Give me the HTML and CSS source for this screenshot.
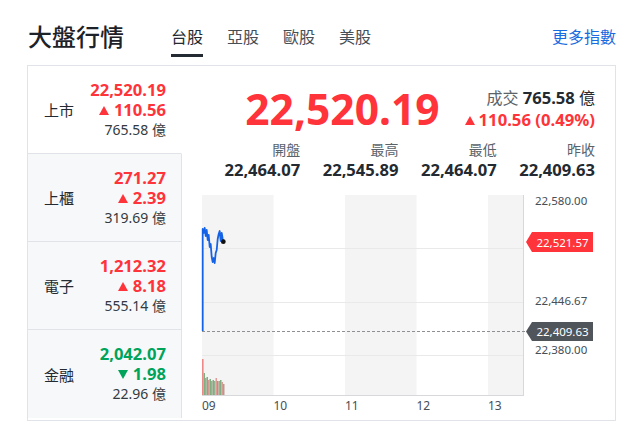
FILE: index.html
```html
<!DOCTYPE html>
<html lang="zh-Hant">
<head>
<meta charset="utf-8">
<title>大盤行情</title>
<link rel="stylesheet" href="styles.css">
</head>
<body>
<div class="page">
  <div class="header">
    <h1 class="title">大盤行情</h1>
    <div class="tabs">
      <span class="tab active">台股</span>
      <span class="tab">亞股</span>
      <span class="tab">歐股</span>
      <span class="tab">美股</span>
    </div>
    <a class="more">更多指數</a>
  </div>
  <div class="card">
    <div class="markets">
      <div class="mkt active">
        <div class="mkt-name">上市</div>
        <div class="mkt-vals">
          <div class="val up">22,520.19</div>
          <div class="val up"><span class="tri-up"></span>110.56</div>
          <div class="vol">765.58 億</div>
        </div>
      </div>
      <div class="mkt">
        <div class="mkt-name">上櫃</div>
        <div class="mkt-vals">
          <div class="val up">271.27</div>
          <div class="val up"><span class="tri-up"></span>2.39</div>
          <div class="vol">319.69 億</div>
        </div>
      </div>
      <div class="mkt">
        <div class="mkt-name">電子</div>
        <div class="mkt-vals">
          <div class="val up">1,212.32</div>
          <div class="val up"><span class="tri-up"></span>8.18</div>
          <div class="vol">555.14 億</div>
        </div>
      </div>
      <div class="mkt last">
        <div class="mkt-name">金融</div>
        <div class="mkt-vals">
          <div class="val down">2,042.07</div>
          <div class="val down"><span class="tri-down"></span>1.98</div>
          <div class="vol">22.96 億</div>
        </div>
      </div>
    </div>
    <div class="main">
      <div class="quote">
        <div class="big up">22,520.19</div>
        <div class="quote-side">
          <div class="deal"><span class="deal-label">成交</span> <b>765.58</b> 億</div>
          <div class="chg up"><span class="tri-up small"></span>110.56 (0.49%)</div>
        </div>
      </div>
      <div class="stats">
        <div class="stat"><div class="stat-label">開盤</div><div class="stat-val">22,464.07</div></div>
        <div class="stat"><div class="stat-label">最高</div><div class="stat-val">22,545.89</div></div>
        <div class="stat"><div class="stat-label">最低</div><div class="stat-val">22,464.07</div></div>
        <div class="stat"><div class="stat-label">昨收</div><div class="stat-val">22,409.63</div></div>
      </div>
      <svg class="chart" width="393" height="222" viewBox="0 0 393 222">
        <rect x="0" y="0" width="71.5" height="200" fill="#f4f4f4"/>
        <rect x="143" y="0" width="71.5" height="200" fill="#f4f4f4"/>
        <rect x="286" y="0" width="35" height="200" fill="#f4f4f4"/>
        <g stroke="#e9e9e9" stroke-width="1">
          <line x1="0" y1="53.5" x2="321" y2="53.5"/>
          <line x1="0" y1="107.5" x2="321" y2="107.5"/>
          <line x1="0" y1="160.5" x2="321" y2="160.5"/>
        </g>
        <line x1="321.5" y1="0" x2="321.5" y2="200" stroke="#d6d8dc"/>
        <line x1="0" y1="200.5" x2="322" y2="200.5" stroke="#d6d8dc"/>
        <line x1="0" y1="136.5" x2="324" y2="136.5" stroke="#8d9196" stroke-dasharray="3 2"/>
        <g>
          <rect x="0" y="164" width="1.6" height="36" fill="#ec8a8a"/>
          <rect x="1.6" y="178" width="1.4" height="22" fill="#7fae83"/>
          <rect x="3" y="183" width="1.5" height="17" fill="#c99a8e"/>
          <rect x="4.5" y="182" width="1.5" height="18" fill="#7fae83"/>
          <rect x="6" y="185" width="1.5" height="15" fill="#d69a92"/>
          <rect x="7.5" y="184" width="1.5" height="16" fill="#7fae83"/>
          <rect x="9" y="186" width="1.5" height="14" fill="#c99a8e"/>
          <rect x="10.5" y="185" width="1.5" height="15" fill="#7fae83"/>
          <rect x="12" y="186" width="1.5" height="14" fill="#8fb592"/>
          <rect x="13.5" y="183" width="1.5" height="17" fill="#e39a96"/>
          <rect x="15" y="186" width="1.5" height="14" fill="#7fae83"/>
          <rect x="16.5" y="186" width="1.5" height="14" fill="#c99a8e"/>
          <rect x="18" y="185" width="1.5" height="15" fill="#7fae83"/>
          <rect x="19.5" y="187" width="1.5" height="13" fill="#d69a92"/>
          <rect x="21" y="189" width="1.5" height="11" fill="#b59a8e"/>
        </g>
        <polyline fill="none" stroke="#1463e6" stroke-width="1.8" stroke-linejoin="round"
          points="0.7,136 0.7,34 1.7,38 2.7,33 3.7,41 4.7,35 5.7,45 6.7,40 7.7,52 8.7,49 9.7,62 10.7,67 11.7,63 12.7,68 13.7,58 14.7,55 15.7,44 16.7,39 17.7,36 18.7,46 19.7,38 20.7,44 21.3,46.5"/>
        <circle cx="21.3" cy="46.7" r="2.4" fill="#111"/>
        <g class="ylab">
          <text x="333" y="5">22,580.00</text>
          <text x="333" y="105">22,446.67</text>
          <text x="333" y="154">22,380.00</text>
        </g>
        <path d="M324,47 L330,37 H391 V57 H330 Z" fill="#ff333a"/>
        <text class="tag" x="360.5" y="47">22,521.57</text>
        <path d="M324,136.5 L330,127 H391 V146 H330 Z" fill="#50555b"/>
        <text class="tag" x="360.5" y="136.5">22,409.63</text>
        <g class="xlab">
          <text x="0" y="210">09</text>
          <text x="71.5" y="210">10</text>
          <text x="143" y="210">11</text>
          <text x="214.5" y="210">12</text>
          <text x="286" y="210">13</text>
        </g>
      </svg>
    </div>
  </div>
</div>
</body>
</html>
```
FILE: styles.css
```css
body {
  margin: 0;
  background: #fff;
  color: #232a31;
  font-family: "Noto Sans", "Noto Sans CJK TC", sans-serif;
}

.page {
  width: 589px;
  margin-left: 27px;
}

.header {
  display: flex;
  align-items: flex-start;
  height: 65px;
  padding-top: 24px;
  box-sizing: border-box;
}

.title {
  margin: 0 0 0 1px;
  width: 143px;
  font-size: 24px;
  line-height: 26px;
  font-weight: 500;
  color: #1d2228;
}

.tabs {
  display: flex;
  gap: 24px;
}

.tab {
  font-size: 16px;
  line-height: 26px;
  color: #464e56;
  padding-bottom: 4px;
  border-bottom: 3px solid transparent;
}

.tab.active {
  color: #232a31;
  border-bottom-color: #232a31;
}

.more {
  margin-left: auto;
  font-size: 16px;
  line-height: 26px;
  color: #1a6de0;
  cursor: pointer;
}

.card {
  display: flex;
  height: 356px;
  box-sizing: border-box;
  border: 1px solid #e0e4e9;
}

.markets {
  width: 154px;
  flex: none;
}

.mkt {
  height: 88px;
  box-sizing: border-box;
  display: flex;
  align-items: center;
  justify-content: space-between;
  padding: 0 15px 0 16px;
  background: #f7f8fa;
  border-right: 1px solid #e0e4e9;
  border-bottom: 1px solid #e0e4e9;
}

.mkt.active {
  background: #fff;
  border-right-color: #fff;
}

.mkt.last {
  border-bottom: none;
}

.mkt-name {
  font-size: 15px;
  color: #232a31;
}

.mkt-vals {
  text-align: right;
}

.val {
  font-size: 16.6px;
  line-height: 20px;
  font-weight: 700;
}

.vol {
  font-size: 14px;
  line-height: 20px;
  color: #333a40;
}

.up { color: #ff333a; }
.down { color: #00a35a; }

.tri-up,
.tri-down {
  display: inline-block;
  width: 0;
  height: 0;
  border-left: 5.5px solid transparent;
  border-right: 5.5px solid transparent;
  margin-right: 5px;
  vertical-align: 1px;
}

.tri-up { border-bottom: 9px solid #ff333a; }
.tri-down { border-top: 9px solid #00a35a; }

.tri-up.small {
  margin-right: 4px;
}

.main {
  flex: 1;
  padding: 21px 20px 0 20px;
  min-width: 0;
}

.quote {
  display: flex;
  justify-content: flex-end;
  align-items: center;
  gap: 25px;
  height: 44px;
}

.big {
  font-size: 42.5px;
  line-height: 44px;
  font-weight: 700;
}

.quote-side {
  text-align: right;
  font-size: 16px;
  line-height: 22px;
}

.deal-label {
  color: #5b636a;
}

.deal b {
  font-size: 16.6px;
  font-weight: 700;
}

.chg {
  font-size: 16.7px;
  font-weight: 700;
}

.stats {
  display: grid;
  grid-template-columns: repeat(4, 1fr);
  margin-top: 9px;
  text-align: right;
}

.stat-label {
  font-size: 14px;
  line-height: 20px;
  color: #5b636a;
}

.stat-val {
  font-size: 16.6px;
  line-height: 20px;
  font-weight: 700;
}

.chart {
  display: block;
  margin-top: 15px;
  overflow: visible;
}

.ylab text {
  font-size: 11.5px;
  fill: #464e56;
  dominant-baseline: central;
}

.tag {
  font-size: 11.5px;
  fill: #fff;
  text-anchor: middle;
  dominant-baseline: central;
}

.xlab text {
  font-size: 12px;
  fill: #464e56;
  dominant-baseline: central;
}
```
